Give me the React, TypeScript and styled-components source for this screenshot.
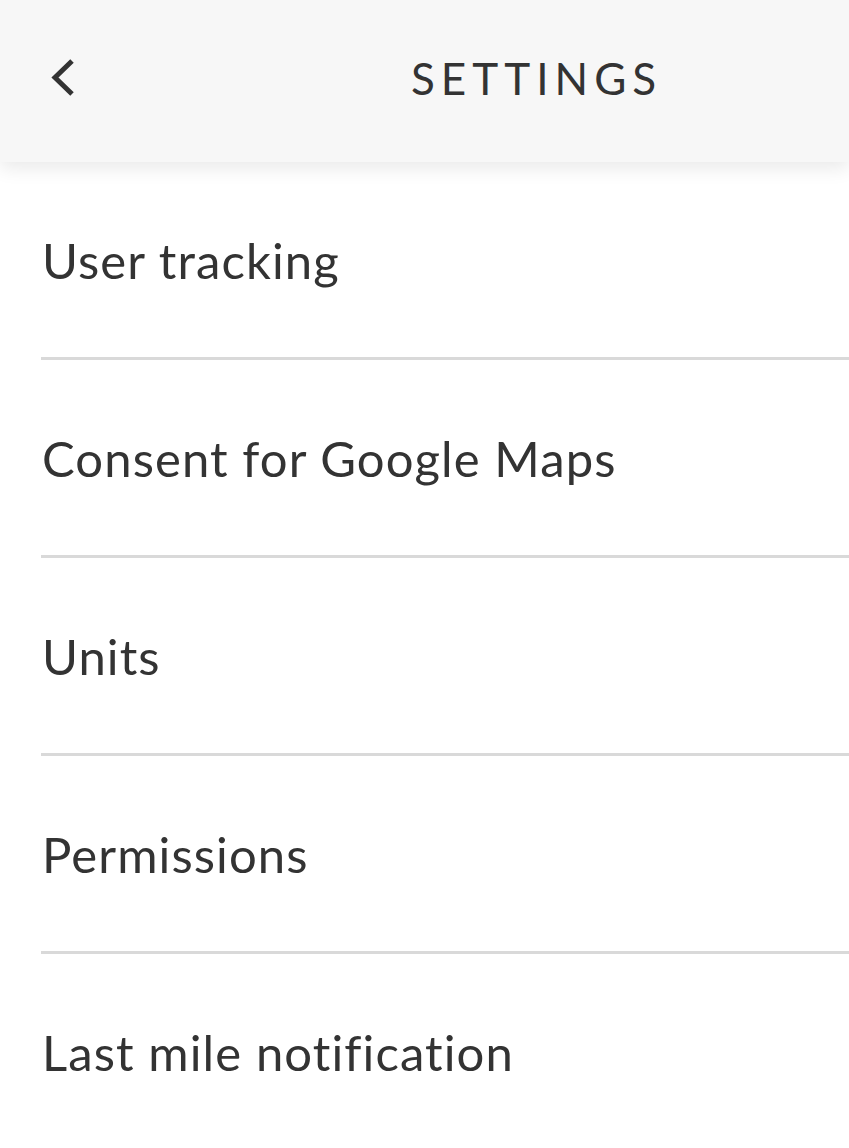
import styled, { createGlobalStyle } from 'styled-components';

const GlobalStyle = createGlobalStyle`
  html, body {
    margin: 0;
    padding: 0;
    background: #ffffff;
  }
  body {
    font-family: "Lato", "Open Sans", sans-serif;
    color: #333333;
  }
`;

const items = [
  'User tracking',
  'Consent for Google Maps',
  'Units',
  'Permissions',
  'Last mile notification',
];

function BackIcon() {
  return (
    <svg width="28" height="40" viewBox="0 0 28 40" fill="none">
      <path d="M23 3 L6 19.5 L23 36" stroke="#333333" strokeWidth="5" strokeLinejoin="miter" />
    </svg>
  );
}

export default function App() {
  return (
    <Page>
      <GlobalStyle />
      <Header>
        <BackButton aria-label="Back">
          <BackIcon />
        </BackButton>
        <Title>SETTINGS</Title>
      </Header>
      <List>
        {items.map(item => (
          <Row key={item}>
            <Label>{item}</Label>
          </Row>
        ))}
      </List>
    </Page>
  );
}

const Page = styled.div`
  width: 849px;
  min-height: 1148px;
  background: #ffffff;
  overflow: hidden;
`;

const Header = styled.header`
  position: relative;
  z-index: 1;
  height: 162px;
  box-sizing: border-box;
  padding-bottom: 7px;
  background: #f7f7f7;
  display: flex;
  align-items: center;
  box-shadow: 0 6px 18px rgba(0, 0, 0, 0.09);
`;

const BackButton = styled.button`
  border: 0;
  background: none;
  padding: 0;
  margin-left: 49px;
  width: 28px;
  height: 40px;
  display: flex;
  cursor: pointer;
`;

const Title = styled.h1`
  margin: 0 0 0 334px;
  font-family: "Lato", sans-serif;
  font-weight: 400;
  font-size: 44px;
  letter-spacing: 6px;
  color: #333333;
`;

const List = styled.div`
  display: flex;
  flex-direction: column;
  padding-left: 41px;
`;

const Row = styled.div`
  height: 195px;
  display: flex;
  align-items: center;
  border-bottom: 3px solid #d9d9d9;

  &:last-child {
    border-bottom: 0;
  }
`;

const Label = styled.span`
  font-size: 49px;
  letter-spacing: 1.1px;
  color: #333333;
  padding-left: 1px;
`;
